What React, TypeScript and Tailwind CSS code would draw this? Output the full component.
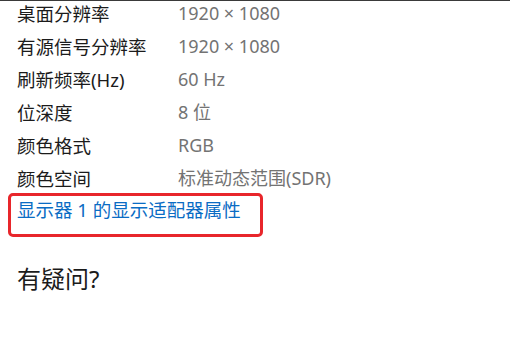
import React from 'react'

const rows = [
  { label: '桌面分辨率', value: '1920 × 1080' },
  { label: '有源信号分辨率', value: '1920 × 1080' },
  { label: '刷新频率(Hz)', value: '60 Hz' },
  { label: '位深度', value: '8 位' },
  { label: '颜色格式', value: 'RGB' },
  { label: '颜色空间', value: '标准动态范围(SDR)' },
]

const font = { fontFamily: '"Noto Sans", "Noto Sans CJK SC", sans-serif' }

export default function App() {
  return (
    <div className="w-[510px] h-[340px] bg-white overflow-hidden border-t border-[#3a3a3a]" style={font}>
      <div className="-mt-[4px]">
        {rows.map(r => (
          <div key={r.label} className="flex items-center h-[33px]">
            <span className="w-[178px] pl-[17px] text-[18.5px] text-[#1b1b1b]">{r.label}</span>
            <span className="text-[18px] text-[#737373]">{r.value}</span>
          </div>
        ))}
      </div>
      <div className="ml-[8px] -mt-[2px] w-[255px] h-[44px] border-[3px] border-[#e8262b] rounded-[5px] flex items-start pt-[1px] pl-[6px]">
        <span className="text-[18.5px] leading-[26px] text-[#0a6cc4]">显示器 1 的显示适配器属性</span>
      </div>
      <div className="pl-[17px] mt-[24px] text-[24px] text-[#1b1b1b]">有疑问?</div>
    </div>
  )
}
